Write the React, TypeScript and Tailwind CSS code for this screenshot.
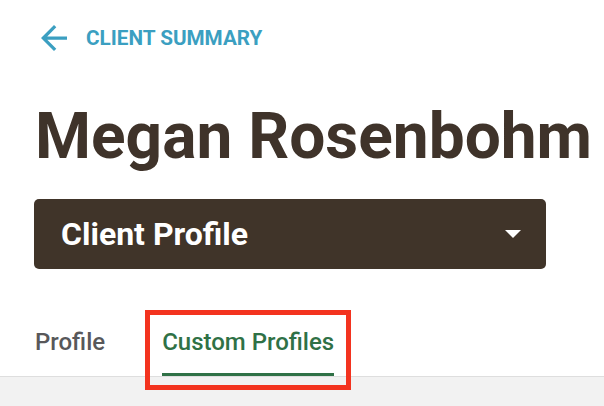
export default function App() {
  return (
    <main className="w-[604px] h-[406px] overflow-hidden bg-white flex flex-col font-['Roboto','Liberation_Sans',sans-serif]">
      {/* back link */}
      <div className="flex items-center gap-[19px] pl-[41px] pt-[25px] h-[50px]">
        <svg width="26" height="26" viewBox="4 4 16 16" className="text-[#3b9fc1]" fill="currentColor">
          <path d="M20 11H7.83l5.59-5.59L12 4l-8 8 8 8 1.41-1.41L7.83 13H20v-2z" />
        </svg>
        <span className="text-[20.7px] leading-[24px] font-bold text-[#3b9fc1]">CLIENT SUMMARY</span>
      </div>

      <h1 className="mt-[55px] pl-[35px] text-[64px] leading-[64px] font-bold text-[#3f332a] whitespace-nowrap">
        Megan Rosenbohm
      </h1>

      <div className="mt-[30px] ml-[34px] w-[512px] h-[70px] rounded-[5px] bg-[#403429] flex items-center justify-between pl-[27px] pr-[25px]">
        <span className="text-[32px] leading-[36px] font-bold text-white">Client Profile</span>
        <svg width="16" height="8" viewBox="0 0 16 8">
          <path d="M0 0h16L8 8z" fill="white" />
        </svg>
      </div>

      <div className="mt-[59px] flex items-end gap-[57px] pl-[35px] border-b border-[#dedede]">
        <button className="text-[24px] leading-[28px] font-medium text-[#58585a] pb-[20px]">Profile</button>
        <div className="relative">
          <button className="text-[24px] leading-[28px] font-medium text-[#2f7146] pb-[17px] border-b-[3px] border-[#2f7146]">
            Custom Profiles
          </button>
          <div className="absolute -left-[17px] -right-[17px] -top-[18px] -bottom-[14px] border-[5px] border-[#f3331f]" />
        </div>
      </div>

      <div className="flex-1 bg-[#f2f2f2]" />
    </main>
  );
}
